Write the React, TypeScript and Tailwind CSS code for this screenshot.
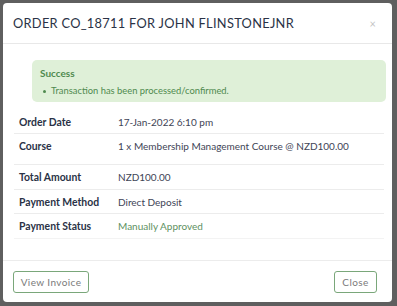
import React from "react";

const rows: { label: string; value: string; h: string; green?: boolean }[] = [
  { label: "Order Date", value: "17-Jan-2022 6:10 pm", h: "h-[24px]" },
  { label: "Course", value: "1 x Membership Management Course @ NZD100.00", h: "h-[31px]" },
  { label: "Total Amount", value: "NZD100.00", h: "h-[25px]" },
  { label: "Payment Method", value: "Direct Deposit", h: "h-[24px]" },
  { label: "Payment Status", value: "Manually Approved", h: "h-[25px]", green: true },
];

export default function App() {
  return (
    <div
      className="w-[397px] h-[306px] bg-[#5f5f5f] pt-[3px] pl-[3px] overflow-hidden"
      style={{ fontFamily: "Lato, 'Open Sans', sans-serif" }}
    >
      <div className="w-[389px] h-[299px] bg-white rounded-[4px] flex flex-col">
        <div className="h-[41px] flex items-center justify-between border-b border-[#e8e8e8] pl-[10px] pr-[16px] shrink-0">
          <span className="text-[12.8px] text-[#2a3246] tracking-[0.3px] leading-none pt-[1px] whitespace-nowrap">
            ORDER CO_18711 FOR JOHN FLINSTONEJNR
          </span>
          <span className="text-[11px] text-[#c4c4c4] leading-none">×</span>
        </div>
        <div className="flex-1 flex flex-col pt-[16px] pl-[11px] pr-[8px]">
          <div className="ml-[18px] mr-[-2px] h-[42px] bg-[#dff0d8] rounded-[5px] pl-[8px] pt-[4px] text-[#4f8a4f] leading-[18px] whitespace-nowrap">
            <div className="font-bold text-[10px]">Success</div>
            <div className="flex items-center text-[9.4px]">
              <span className="w-[3px] h-[3px] rounded-full bg-[#4f8a4f] ml-[3px] mr-[5px]" />
              <span>Transaction has been processed/confirmed.</span>
            </div>
          </div>
          <div className="mt-[8px]">
            {rows.map((r, i) => (
              <div
                key={r.label}
                className={`${r.h} flex leading-[24px] whitespace-nowrap ${i < rows.length - 1 ? "border-b border-[#ececec]" : "border-b border-[#f3f3f3]"}`}
              >
                <div className="w-[104px] pl-[5px] font-bold text-[10.4px] text-[#2a3246]">{r.label}</div>
                <div className={`text-[10px] ${r.green ? "text-[#5e9161]" : "text-[#3e4456]"}`}>{r.value}</div>
              </div>
            ))}
          </div>
        </div>
        <div className="h-[42px] border-t border-[#ececec] flex items-start justify-between pt-[10px] pl-[10px] pr-[15px] shrink-0">
          <button className="h-[22px] w-[76px] border border-[#7aa77a] rounded-[3px] text-[10px] text-[#7a7a7a] tracking-[0.4px] bg-white">
            View Invoice
          </button>
          <button className="h-[22px] w-[43px] border border-[#7aa77a] rounded-[3px] text-[10px] text-[#7a7a7a] tracking-[0.4px] bg-white">
            Close
          </button>
        </div>
      </div>
    </div>
  );
}
